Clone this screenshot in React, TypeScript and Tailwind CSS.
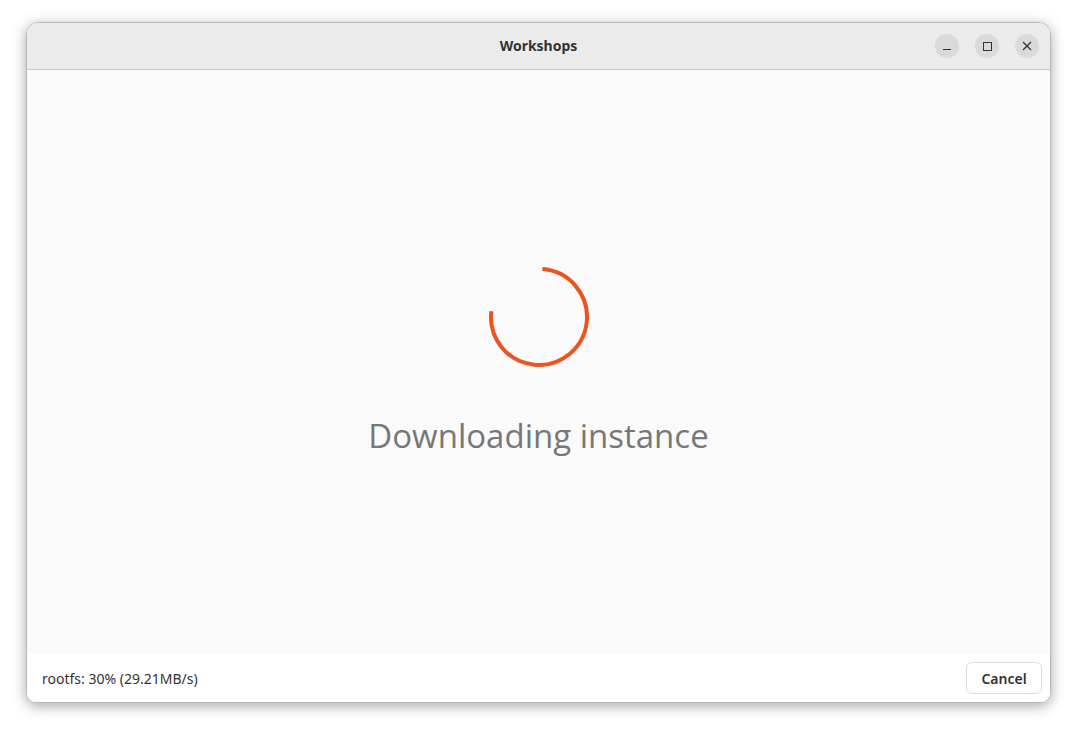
import React from 'react';

const Spinner: React.FC = () => {
  // arc from ~-86deg clockwise to ~187deg, radius 48
  const cx = 50;
  const cy = 50;
  const r = 48;
  const a0 = (-86 * Math.PI) / 180;
  const a1 = (187 * Math.PI) / 180;
  const x0 = cx + r * Math.cos(a0);
  const y0 = cy + r * Math.sin(a0);
  const x1 = cx + r * Math.cos(a1);
  const y1 = cy + r * Math.sin(a1);
  return (
    <svg width="100" height="100" viewBox="0 0 100 100">
      <path
        d={`M ${x0} ${y0} A ${r} ${r} 0 1 1 ${x1} ${y1}`}
        fill="none"
        stroke="#e95420"
        strokeWidth="4"
      />
    </svg>
  );
};

const App: React.FC = () => {
  return (
    <div className="w-[1076px] h-[732px] bg-white pt-[22px] pl-[26px] font-['Noto_Sans','Open_Sans',sans-serif]">
      <div className="w-[1025px] h-[681px] flex flex-col rounded-t-[12px] rounded-b-[10px] overflow-hidden border border-[#b8b8b8] shadow-[0_3px_14px_rgba(0,0,0,0.35)]">
        {/* Header */}
        <div className="h-[47px] flex-shrink-0 bg-[#ebebeb] border-b border-[#c8c8c8] flex items-center relative">
          <div className="flex-1 text-center text-[14px] font-bold text-[#333] leading-none">Workshops</div>
          <div className="absolute right-[11px] top-[11px] flex gap-[16px]">
            <button className="w-[24px] h-[24px] rounded-full bg-[#dadada] flex items-center justify-center">
              <span className="block w-[8px] h-[1px] bg-[#333] mt-[6px]" />
            </button>
            <button className="w-[24px] h-[24px] rounded-full bg-[#dadada] flex items-center justify-center">
              <span className="block w-[9px] h-[9px] border border-[#333]" />
            </button>
            <button className="w-[24px] h-[24px] rounded-full bg-[#dadada] flex items-center justify-center">
              <svg width="10" height="10" viewBox="0 0 10 10">
                <path d="M1 1 L9 9 M9 1 L1 9" stroke="#333" strokeWidth="1.3" />
              </svg>
            </button>
          </div>
        </div>

        {/* Body */}
        <div className="flex-1 bg-[#fafafa] flex flex-col items-center pt-[197px]">
          <Spinner />
          <div className="mt-[52px] text-[33px] leading-none text-[#777] font-['Open_Sans','Noto_Sans',sans-serif]">
            Downloading instance
          </div>
        </div>

        {/* Footer */}
        <div className="h-[48px] flex-shrink-0 bg-white flex items-center justify-between pl-[15px] pr-[8px]">
          <span className="text-[14px] text-[#333]">rootfs: 30% (29.21MB/s)</span>
          <button className="w-[76px] h-[32px] rounded-[6px] border border-[#dcdcdc] bg-white text-[14px] font-semibold text-[#333]">
            Cancel
          </button>
        </div>
      </div>
    </div>
  );
};

export default App;
